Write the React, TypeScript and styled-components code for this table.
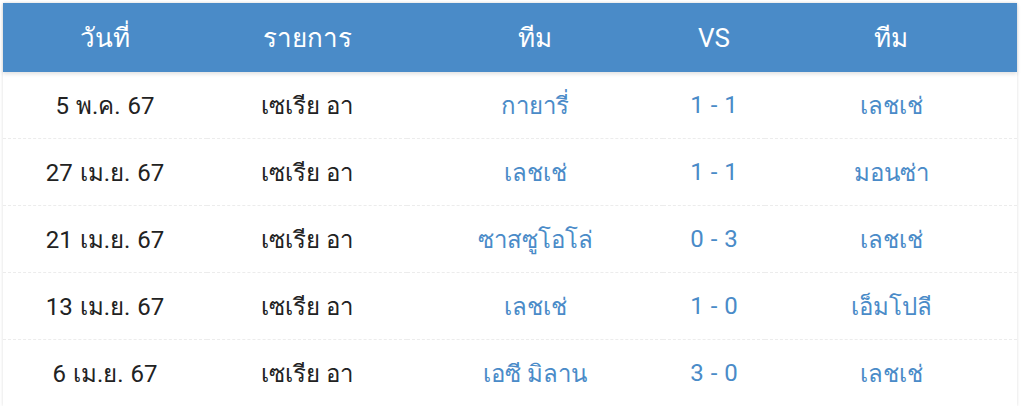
import React from "react";
import styled, { createGlobalStyle } from "styled-components";

const Global = createGlobalStyle`
  body {
    margin: 0;
    background: #fff;
    font-family: Roboto, "Noto Sans", "DejaVu Sans", sans-serif;
  }
`;

const Page = styled.div`
  padding: 3px 7px 0 3px;
`;

const Table = styled.table`
  width: 1014px;
  border-collapse: collapse;
  table-layout: fixed;
  box-shadow: 0 0 3px rgba(0, 0, 0, 0.14);
`;

const HeadRow = styled.tr`
  background: #4a8bc8;
  box-shadow: 0 2px 4px rgba(0, 0, 0, 0.12);
`;

const Th = styled.th<{ $w: number }>`
  width: ${(p) => p.$w}px;
  height: 69px;
  padding: 0;
  color: #fff;
  font-size: 26px;
  font-weight: 400;
  text-align: center;
`;

const Row = styled.tr<{ $last?: boolean }>`
  border-bottom: ${(p) => (p.$last ? "none" : "1px dashed #ececec")};
`;

const Td = styled.td<{ $blue?: boolean }>`
  height: 66px;
  padding: 0;
  text-align: center;
  font-size: 24px;
  word-spacing: 1px;
  color: ${(p) => (p.$blue ? "#4a8bc8" : "#222")};
`;

const cols = [
  { t: "วันที่", w: 204 },
  { t: "รายการ", w: 200 },
  { t: "ทีม", w: 256 },
  { t: "VS", w: 102 },
  { t: "ทีม", w: 252 },
];

const matches = [
  ["5 พ.ค. 67", "เซเรีย อา", "กายารี่", "1 - 1", "เลชเช่"],
  ["27 เม.ย. 67", "เซเรีย อา", "เลชเช่", "1 - 1", "มอนซ่า"],
  ["21 เม.ย. 67", "เซเรีย อา", "ซาสซูโอโล่", "0 - 3", "เลชเช่"],
  ["13 เม.ย. 67", "เซเรีย อา", "เลชเช่", "1 - 0", "เอ็มโปลี"],
  ["6 เม.ย. 67", "เซเรีย อา", "เอซี มิลาน", "3 - 0", "เลชเช่"],
];

export default function App() {
  return (
    <Page>
      <Global />
      <Table>
        <thead>
          <HeadRow>
            {cols.map((c, i) => (
              <Th key={i} $w={c.w}>{c.t}</Th>
            ))}
          </HeadRow>
        </thead>
        <tbody>
          {matches.map((m, i) => (
            <Row key={i} $last={i === matches.length - 1}>
              <Td>{m[0]}</Td>
              <Td>{m[1]}</Td>
              <Td $blue>{m[2]}</Td>
              <Td $blue>{m[3]}</Td>
              <Td $blue>{m[4]}</Td>
            </Row>
          ))}
        </tbody>
      </Table>
    </Page>
  );
}
